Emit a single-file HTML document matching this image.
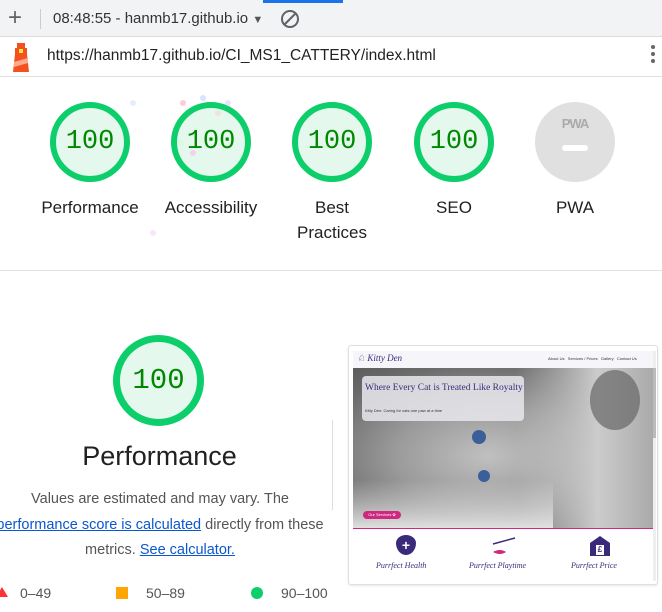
<!DOCTYPE html>
<html><head><meta charset="utf-8"><style>
*{margin:0;padding:0;box-sizing:border-box}
body{width:662px;height:612px;overflow:hidden;background:#fff;font-family:"Liberation Sans",Arial,sans-serif;position:relative;color:#212121}
.abs{position:absolute}
.g{position:absolute;width:80px;height:80px;border-radius:50%;border:6px solid #0cce6b;background:#e5f8ee;color:#008800;font-family:"Liberation Mono",monospace;font-size:27px;display:flex;align-items:center;justify-content:center}
.lbl{position:absolute;width:120px;text-align:center;font-size:17px;line-height:25px;color:#212121}
.dot{position:absolute;width:6px;height:6px;border-radius:50%;opacity:.5}
</style></head><body>
<div class="abs" style="left:0;top:0;width:662px;height:37px;background:#f1f3f4;border-bottom:1px solid #dadce0"></div>
<div class="abs" style="left:263px;top:0;width:80px;height:3px;background:#1a73e8"></div>
<div class="abs" style="left:8px;top:6px;font-size:24px;color:#5f6368;line-height:24px">+</div>
<div class="abs" style="left:40px;top:9px;width:1px;height:20px;background:#ccc"></div>
<div class="abs" style="left:53px;top:10px;font-size:15px;color:#333;white-space:nowrap">08:48:55 - hanmb17.github.io <span style="font-size:11px;color:#555">▼</span></div>
<svg class="abs" style="left:280px;top:9px" width="20" height="20"><circle cx="10" cy="10" r="8" fill="none" stroke="#5f6368" stroke-width="2"/><line x1="4.5" y1="15.5" x2="15.5" y2="4.5" stroke="#5f6368" stroke-width="2"/></svg>
<svg class="abs" style="left:10px;top:42px" width="22" height="30"><rect x="7" y="1" width="8" height="5" fill="#f4511e"/><rect x="5" y="6" width="12" height="6" fill="#f4511e"/><rect x="9" y="7" width="4" height="4" fill="#ffeb3b"/><polygon points="5,12 17,12 19,30 3,30" fill="#f4511e"/><polygon points="4,20 18,16 18,21 4,25" fill="#ffab91"/></svg>
<div class="abs" style="left:47px;top:47px;font-size:15.5px;color:#222;white-space:nowrap">https://hanmb17.github.io/CI_MS1_CATTERY/index.html</div>
<div class="abs" style="left:651px;top:45px;width:4px;height:4px;border-radius:50%;background:#666;box-shadow:0 7px 0 #666,0 14px 0 #666"></div>
<div class="abs" style="left:0;top:76px;width:662px;height:1px;background:#e0e0e0"></div>

<div class="g" style="left:50px;top:102px">100</div>
<div class="g" style="left:171px;top:102px">100</div>
<div class="g" style="left:292px;top:102px">100</div>
<div class="g" style="left:414px;top:102px">100</div>
<div class="abs" style="left:535px;top:102px;width:80px;height:80px;border-radius:50%;background:#e0e0e0"></div>
<div class="abs" style="left:535px;top:116px;width:80px;text-align:center;font-size:13px;font-weight:bold;color:#aaa;letter-spacing:-1px">PWA</div>
<div class="abs" style="left:562px;top:145px;width:26px;height:6px;border-radius:3px;background:#fff"></div>
<div class="lbl" style="left:30px;top:195px">Performance</div>
<div class="lbl" style="left:151px;top:195px">Accessibility</div>
<div class="lbl" style="left:272px;top:195px">Best<br>Practices</div>
<div class="lbl" style="left:394px;top:195px">SEO</div>
<div class="lbl" style="left:515px;top:195px">PWA</div>
<div class="dot" style="left:180px;top:100px;background:#f9a"></div><div class="dot" style="left:200px;top:95px;background:#acf"></div><div class="dot" style="left:215px;top:110px;background:#fcc"></div><div class="dot" style="left:178px;top:140px;background:#cfc"></div><div class="dot" style="left:190px;top:150px;background:#fae"></div><div class="dot" style="left:225px;top:100px;background:#ccf"></div><div class="dot" style="left:130px;top:100px;background:#cdf"></div><div class="dot" style="left:150px;top:230px;background:#ecf"></div>
<div class="abs" style="left:0;top:270px;width:662px;height:1px;background:#e0e0e0"></div>

<div class="abs" style="left:113px;top:335px;width:91px;height:91px;border-radius:50%;border:7px solid #0cce6b;background:#e5f8ee;color:#008800;font-family:'Liberation Mono',monospace;font-size:29px;display:flex;align-items:center;justify-content:center">100</div>
<div class="abs" style="left:0;top:441px;width:319px;text-align:center;font-size:27px;color:#212121">Performance</div>
<div class="abs" style="left:-40px;top:487px;width:400px;text-align:center;font-size:14.5px;line-height:25.5px;color:#555;white-space:nowrap">Values are estimated and may vary. The<br><span style="color:#0b57d0;text-decoration:underline">performance score is calculated</span> directly from these<br>metrics. <span style="color:#0b57d0;text-decoration:underline">See calculator.</span></div>
<div class="abs" style="left:332px;top:420px;width:1px;height:90px;background:#ddd"></div>
<div class="abs" style="left:-4px;top:587px;width:0;height:0;border-left:6px solid transparent;border-right:6px solid transparent;border-bottom:10px solid #f33"></div>
<div class="abs" style="left:20px;top:585px;font-size:14px;color:#555">0–49</div>
<div class="abs" style="left:116px;top:587px;width:12px;height:12px;background:#ffa400"></div>
<div class="abs" style="left:146px;top:585px;font-size:14px;color:#555">50–89</div>
<div class="abs" style="left:251px;top:587px;width:12px;height:12px;border-radius:50%;background:#0cce6b"></div>
<div class="abs" style="left:281px;top:585px;font-size:14px;color:#555">90–100</div>

<div class="abs" style="left:348px;top:345px;width:310px;height:240px;border:1px solid #e0e0e0;border-radius:3px;background:#fff;box-shadow:0 1px 2px rgba(0,0,0,.1)"></div>
<div class="abs" style="left:353px;top:351px;width:300px;height:17px;background:#f6f6fa"></div>
<div class="abs" style="left:357px;top:353px;font-size:9px;color:#3b2a7a;font-family:'Liberation Serif',serif;font-style:italic">♘ Kitty Den</div>
<div class="abs" style="left:548px;top:356px;font-size:4px;color:#333;white-space:nowrap">About Us &nbsp; Services / Prices &nbsp; Gallery &nbsp; Contact Us</div>
<div class="abs" style="left:353px;top:368px;width:300px;height:160px;background:radial-gradient(ellipse at 45% 55%,#c0c0c0 0%,#9a9a9a 40%,#6a6a6a 75%,#555 100%)"></div>
<div class="abs" style="left:515px;top:368px;width:138px;height:160px;background:linear-gradient(90deg,rgba(200,200,200,0),#ccc 60%,#aaa)"></div>
<div class="abs" style="left:590px;top:370px;width:50px;height:60px;border-radius:50%;background:#666;opacity:.7"></div>
<div class="abs" style="left:353px;top:480px;width:200px;height:48px;background:linear-gradient(rgba(220,220,220,0),#e0e0e0)"></div>
<div class="abs" style="left:472px;top:430px;width:14px;height:14px;border-radius:50%;background:#3b5f99"></div>
<div class="abs" style="left:478px;top:470px;width:12px;height:12px;border-radius:50%;background:#3b5f99"></div>
<div class="abs" style="left:362px;top:376px;width:162px;height:45px;border-radius:4px;background:rgba(230,230,235,.88)"></div>
<div class="abs" style="left:365px;top:383px;font-size:9.5px;color:#3b2a7a;font-family:'Liberation Serif',serif;white-space:nowrap">Where Every Cat is Treated Like Royalty</div>
<div class="abs" style="left:365px;top:408px;font-size:4px;color:#333;white-space:nowrap">Kitty Den: Caring for cats one paw at a time</div>
<div class="abs" style="left:363px;top:511px;width:38px;height:8px;border-radius:4px;background:#d0277f;color:#fff;font-size:4px;line-height:8px;text-align:center">Our Services ✿</div>
<div class="abs" style="left:353px;top:528px;width:300px;height:1px;background:#d0277f"></div>
<div class="abs" style="left:396px;top:535px;width:20px;height:20px;background:#3b2a7a;border-radius:50% 50% 50% 50%/40% 40% 60% 60%;color:#fff;font-size:14px;line-height:20px;text-align:center;font-weight:bold">+</div>
<svg class="abs" style="left:488px;top:536px" width="30" height="22"><line x1="5" y1="8" x2="27" y2="2" stroke="#3b2a7a" stroke-width="1.5"/><path d="M5 16 Q12 12 18 16 Q12 20 5 16" fill="#d0277f"/></svg>
<div class="abs" style="left:590px;top:536px;width:20px;height:20px;background:#3b2a7a;clip-path:polygon(50% 0,100% 35%,100% 100%,0 100%,0 35%)"></div>
<div class="abs" style="left:596px;top:545px;width:8px;height:10px;background:#fff;color:#3b2a7a;font-size:8px;font-weight:bold;text-align:center;line-height:10px">£</div>
<div class="abs" style="left:353px;top:561px;width:300px;font-size:8px;color:#3b2a7a;font-family:'Liberation Serif',serif;font-style:italic;white-space:nowrap">
<span class="abs" style="left:23px">Purrfect Health</span><span class="abs" style="left:116px">Purrfect Playtime</span><span class="abs" style="left:218px">Purrfect Price</span></div>
<div class="abs" style="left:653px;top:351px;width:3px;height:230px;background:#eee"></div>
<div class="abs" style="left:653px;top:368px;width:3px;height:70px;background:#bbb"></div>
</body></html>
